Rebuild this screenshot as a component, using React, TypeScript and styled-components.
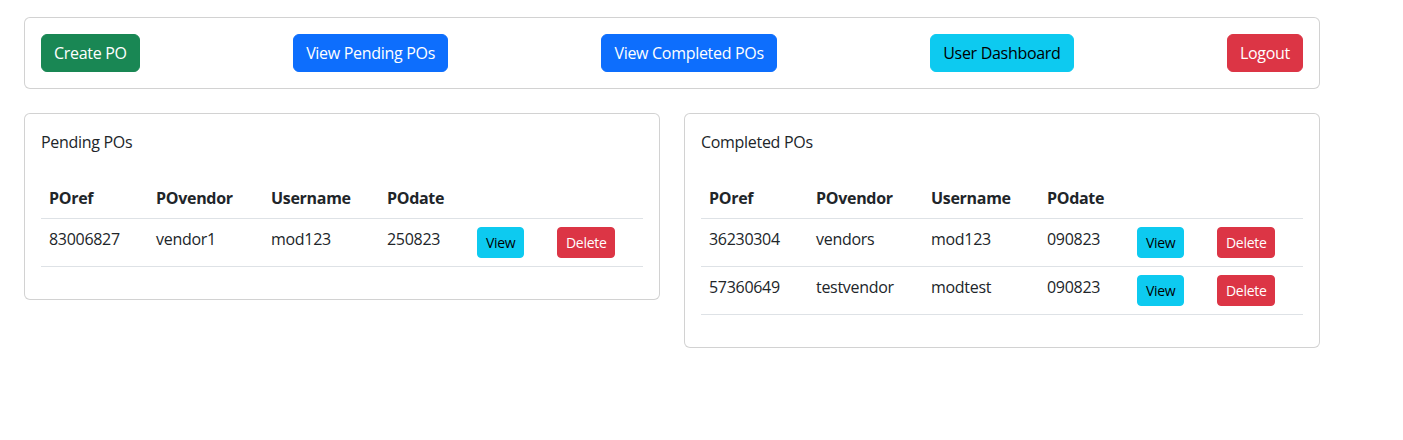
import React from "react";
import styled, { createGlobalStyle } from "styled-components";

const Global = createGlobalStyle`
  html, body { margin: 0; padding: 0; background: #fff; }
  body {
    font-family: "Open Sans", "Noto Sans", sans-serif;
    font-size: 16px;
    line-height: 1.5;
    letter-spacing: -0.3px;
    color: #212529;
  }
  * { box-sizing: border-box; }
`;

const Page = styled.div`
  width: 1296px;
  margin-left: 24px;
  padding-top: 17px;
  display: flex;
  flex-direction: column;
  gap: 24px;
`;

const Card = styled.div`
  border: 1px solid rgba(0, 0, 0, 0.175);
  border-radius: 6px;
  background: #fff;
`;

const CardBody = styled.div`
  padding: 16px;
`;

const Nav = styled(CardBody)`
  display: flex;
  justify-content: space-between;
  align-items: center;
`;

const variants: Record<string, { bg: string; fg: string }> = {
  success: { bg: "#198754", fg: "#fff" },
  primary: { bg: "#0d6efd", fg: "#fff" },
  info: { bg: "#0dcaf0", fg: "#000" },
  danger: { bg: "#dc3545", fg: "#fff" },
};

const Button = styled.button<{ $v: string }>`
  font-family: inherit;
  font-size: 16px;
  line-height: 24px;
  letter-spacing: -0.3px;
  padding: 6px 12px;
  border: 1px solid ${(p) => variants[p.$v].bg};
  border-radius: 6px;
  background: ${(p) => variants[p.$v].bg};
  color: ${(p) => variants[p.$v].fg};
  cursor: pointer;
`;

const SmallButton = styled(Button)`
  font-size: 14px;
  line-height: 21px;
  padding: 4px 8px;
  border-radius: 4px;
`;

const Row = styled.div`
  display: flex;
  gap: 24px;
  align-items: flex-start;
`;

const Half = styled(Card)`
  flex: 1 1 0;
`;

const Title = styled.div`
  font-size: 16px;
  line-height: 24px;
  margin-bottom: 24px;
`;

const Table = styled.table`
  width: 100%;
  border-collapse: collapse;
  margin-bottom: 16px;
  table-layout: fixed;
`;

const Th = styled.th<{ $w?: number }>`
  text-align: left;
  font-weight: 700;
  padding: 8px;
  border-bottom: 1px solid #dee2e6;
  vertical-align: top;
  ${(p) => (p.$w ? `width: ${p.$w}px;` : "")}
`;

const Td = styled.td`
  padding: 8px;
  border-bottom: 1px solid #dee2e6;
  vertical-align: top;
  white-space: nowrap;
`;

type Po = { ref: string; vendor: string; user: string; date: string };

const PoTable = ({ title, rows }: { title: string; rows: Po[] }) => (
  <Half>
    <CardBody>
      <Title>{title}</Title>
      <Table>
        <thead>
          <tr>
            <Th $w={107}>POref</Th>
            <Th $w={115}>POvendor</Th>
            <Th $w={116}>Username</Th>
            <Th $w={90}>POdate</Th>
            <Th $w={80}></Th>
            <Th></Th>
          </tr>
        </thead>
        <tbody>
          {rows.map((r) => (
            <tr key={r.ref}>
              <Td>{r.ref}</Td>
              <Td>{r.vendor}</Td>
              <Td>{r.user}</Td>
              <Td>{r.date}</Td>
              <Td>
                <SmallButton $v="info">View</SmallButton>
              </Td>
              <Td>
                <SmallButton $v="danger">Delete</SmallButton>
              </Td>
            </tr>
          ))}
        </tbody>
      </Table>
    </CardBody>
  </Half>
);

export default function App() {
  return (
    <>
      <Global />
      <Page>
        <Card>
          <Nav>
            <Button $v="success">Create PO</Button>
            <Button $v="primary">View Pending POs</Button>
            <Button $v="primary">View Completed POs</Button>
            <Button $v="info">User Dashboard</Button>
            <Button $v="danger">Logout</Button>
          </Nav>
        </Card>
        <Row>
          <PoTable
            title="Pending POs"
            rows={[{ ref: "83006827", vendor: "vendor1", user: "mod123", date: "250823" }]}
          />
          <PoTable
            title="Completed POs"
            rows={[
              { ref: "36230304", vendor: "vendors", user: "mod123", date: "090823" },
              { ref: "57360649", vendor: "testvendor", user: "modtest", date: "090823" },
            ]}
          />
        </Row>
      </Page>
    </>
  );
}
